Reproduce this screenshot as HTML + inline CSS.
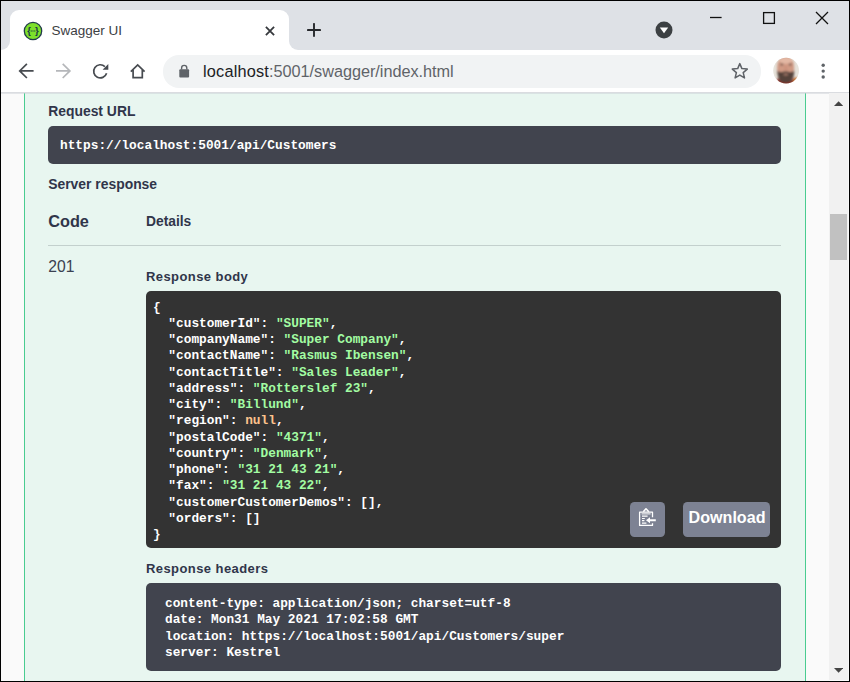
<!DOCTYPE html>
<html>
<head>
<meta charset="utf-8">
<title>Swagger UI</title>
<style>
*{box-sizing:border-box;margin:0;padding:0}
html,body{width:850px;height:682px;overflow:hidden;background:#000}
body{position:relative;font-family:"Liberation Sans",sans-serif;color:#3b4151}
.abs{position:absolute}
#win{left:1px;top:1px;width:848px;height:680px;background:#fff;overflow:hidden}
#tabstrip{left:0;top:0;width:848px;height:49px;background:#dee1e6}
#tab{left:9px;top:9.4px;width:278.7px;height:39.6px;background:#fff;border-radius:9px 9px 0 0}
.flare{width:9px;height:9px;bottom:0;background:#fff}
.flare i{display:block;width:9px;height:9px;background:#dee1e6}
#tabtitle{left:41.5px;top:12.5px;font-size:13.5px;color:#3c4043;white-space:nowrap}
#toolbar{left:0;top:49px;width:848px;height:43px;background:#fff;border-bottom:1px solid #dadce0}
#pill{left:162px;top:5px;width:597.5px;height:32.6px;border-radius:16px;background:#f1f3f4}
#url{left:40px;top:7px;font-size:16.3px;line-height:18px;color:#202124;white-space:nowrap}
#url{letter-spacing:.2px}#url span{color:#5f6368;letter-spacing:-.04px}
#page{left:0;top:92px;width:828px;height:588px;background:#fafafa;overflow:hidden}
#panel{left:23px;top:0;width:782px;height:588px;background:#e8f6f0;border-left:1px solid #49cc90;border-right:1px solid #49cc90}
.lbl{font-weight:bold;color:#30354a;white-space:nowrap}
.dark{background:#41444e;border-radius:5px}
.mono{font-family:"Liberation Mono",monospace;font-weight:bold;color:#fff;white-space:pre}
#sb{left:828px;top:92px;width:20px;height:588px;background:#f1f1f1}
#thumb{left:1px;top:121px;width:17px;height:46px;background:#c1c1c1}
.g{color:#a2fca2}.o{color:#fcc28c}
</style>
</head>
<body>
<div id="win" class="abs">
  <div id="tabstrip" class="abs">
    <div id="tab" class="abs">
      <div class="flare abs" style="left:-9px"><i style="border-radius:0 0 9px 0"></i></div>
      <div class="flare abs" style="right:-9px"><i style="border-radius:0 0 0 9px"></i></div>
      <svg class="abs" style="left:13px;top:10.2px" width="20" height="20" viewBox="0 0 20 20"><circle cx="10" cy="10" r="8.7" fill="#7de02b" stroke="#213b4b" stroke-width="1.3"/><g font-family="Liberation Sans, sans-serif" font-size="9.5" font-weight="bold" text-anchor="middle" fill="#173647"><text x="6.1" y="13.1">{</text><text x="13.9" y="13.1">}</text></g><path d="M7.7 10 H12.3" stroke="#173647" stroke-width="1.1" stroke-dasharray="1.1 0.65"/></svg>
      <div id="tabtitle" class="abs">Swagger UI</div>
      <svg class="abs" style="left:254.3px;top:14.2px" width="12" height="12" viewBox="0 0 12 12"><path d="M1.9 1.9 L10.1 10.1 M10.1 1.9 L1.9 10.1" stroke="#36393d" stroke-width="1.8" fill="none"/></svg>
    </div>
    <svg class="abs" style="left:306px;top:22px" width="14" height="14" viewBox="0 0 14 14"><path d="M7 0.9 V13.1 M0.9 7 H13.1" stroke="#26282c" stroke-width="1.9" fill="none" stroke-linecap="round"/></svg>
    <svg class="abs" style="left:654px;top:20.3px" width="18" height="18" viewBox="0 0 18 18"><circle cx="9" cy="9" r="8.5" fill="#3c4043"/><path d="M4.8 6.6 H13.2 L9 12.2 Z" fill="#fff"/></svg>
    <svg class="abs" style="left:708px;top:9.3px" width="14" height="14" viewBox="0 0 14 14"><path d="M1 7.5 H12.6" stroke="#111" stroke-width="1.3"/></svg>
    <svg class="abs" style="left:761px;top:10px" width="14" height="14" viewBox="0 0 14 14"><rect x="1.6" y="1.6" width="10.8" height="10.8" fill="none" stroke="#111" stroke-width="1.3"/></svg>
    <svg class="abs" style="left:814px;top:10px" width="14" height="14" viewBox="0 0 14 14"><path d="M1 1 L13 13 M13 1 L1 13" stroke="#111" stroke-width="1.3" fill="none"/></svg>
  </div>
  <div id="toolbar" class="abs">
    <div id="pill" class="abs">
      <div id="url" class="abs">localhost<span>:5001/swagger/index.html</span></div>
    </div>
    <svg class="abs" style="left:0;top:0" width="848" height="42" viewBox="1 50 848 42">
      <g fill="none" stroke="#474b50" stroke-width="1.7">
        <path d="M33.6 70.9 H19.6 M26.9 63.8 L19.7 70.9 L26.9 78"/>
        <path d="M106.6 73.3 A6.6 6.6 0 1 1 104.9 66.6"/>
        <path d="M130.8 71.7 L137.7 65 L144.6 71.7 M133.1 70 V77.7 H142.3 V70"/>
      </g>
      <path d="M108.3 64 V69.7 H102.6 Z" fill="#474b50"/>
      <path d="M56 70.9 H70 M62.7 63.8 L69.9 70.9 L62.7 78" fill="none" stroke="#b5b7ba" stroke-width="1.7"/>
      <g>
        <rect x="179.3" y="69.2" width="9.8" height="8.4" rx="1" fill="#5f6368"/>
        <path d="M181.6 69.6 V68 A2.6 2.6 0 0 1 186.8 68 V69.6" stroke="#5f6368" stroke-width="1.4" fill="none"/>
      </g>
      <path d="M739.8 63.6 L741.9 68.6 L747.3 69.1 L743.2 72.6 L744.5 77.9 L739.8 75.1 L735.1 77.9 L736.4 72.6 L732.3 69.1 L737.7 68.6 Z" stroke="#5f6368" stroke-width="1.5" fill="none" stroke-linejoin="round"/>
      <g>
        <clipPath id="av"><circle cx="786.1" cy="70.7" r="12.85"/></clipPath>
        <filter id="bl" x="-20%" y="-20%" width="140%" height="140%"><feGaussianBlur stdDeviation="0.9"/></filter>
        <g clip-path="url(#av)">
          <rect x="772" y="56" width="29" height="30" fill="#e6e2da"/>
          <g filter="url(#bl)">
            <path d="M776 86 L777.5 78 L782 82 L790 82 L795 77.5 L797 86 Z" fill="#8a2b22"/>
            <path d="M793.5 79 L797.5 77 L798 83 L793 85 Z" fill="#c9742e"/>
            <ellipse cx="785.6" cy="68" rx="8.6" ry="13.5" fill="#d09a84"/>
            <ellipse cx="785.8" cy="60.5" rx="6.5" ry="3.2" fill="#e3b8a4"/>
            <path d="M777.3 70.5 Q777.6 80 781.5 82 Q785.8 83.6 790 82 Q794 80 794.3 70.5 Q792 72.5 789.5 72 Q785.8 70.6 782 72 Q779.6 72.5 777.3 70.5 Z" fill="#54433b"/>
            <ellipse cx="785.8" cy="74.4" rx="2.4" ry="1" fill="#a7796a"/>
            <ellipse cx="781.8" cy="64.5" rx="1.5" ry="0.9" fill="#6b5148"/>
            <ellipse cx="790.2" cy="64.5" rx="1.5" ry="0.9" fill="#6b5148"/>
            <path d="M785.4 64 L784.6 70 L787.2 70 Z" fill="#c98d78"/>
          </g>
        </g>
      </g>
      <g fill="#5f6368"><circle cx="823.2" cy="65.2" r="1.7"/><circle cx="823.2" cy="71.1" r="1.7"/><circle cx="823.2" cy="77" r="1.7"/></g>
    </svg>
  </div>
  <div id="page" class="abs">
    <div id="panel" class="abs"></div>
    <div class="abs" style="left:0;top:0;width:828px;height:1px;background:rgba(200,204,210,.45)"></div>
    <div class="lbl abs" style="left:47.2px;top:10.4px;font-size:13.9px">Request URL</div>
    <div class="dark abs" style="left:47px;top:32.6px;width:733px;height:38.2px"></div>
    <div class="mono abs" style="left:59px;top:45px;font-size:12.8px">https://localhost:5001/api/Customers</div>
    <div class="lbl abs" style="left:47.2px;top:82.7px;font-size:13.9px">Server response</div>
    <div class="lbl abs" style="left:47.2px;top:119px;font-size:16.3px">Code</div>
    <div class="lbl abs" style="left:145px;top:121px;font-size:13.8px">Details</div>
    <div class="abs" style="left:47px;top:152px;width:733px;height:1px;background:#c3d0cd"></div>
    <div class="abs" style="left:47.2px;top:165px;font-size:15.7px;color:#3b4151">201</div>
    <div class="lbl abs" style="left:145px;top:176px;font-size:13px;letter-spacing:.42px">Response body</div>
    <div class="dark abs" style="left:145px;top:197.7px;width:635px;height:257.8px;background:#333"></div>
<div class="mono abs" style="left:152px;top:206.5px;font-size:12.8px;line-height:16.25px">{
  "customerId": <span class="g">"SUPER"</span>,
  "companyName": <span class="g">"Super Company"</span>,
  "contactName": <span class="g">"Rasmus Ibensen"</span>,
  "contactTitle": <span class="g">"Sales Leader"</span>,
  "address": <span class="g">"Rotterslef 23"</span>,
  "city": <span class="g">"Billund"</span>,
  "region": <span class="o">null</span>,
  "postalCode": <span class="g">"4371"</span>,
  "country": <span class="g">"Denmark"</span>,
  "phone": <span class="g">"31 21 43 21"</span>,
  "fax": <span class="g">"31 21 43 22"</span>,
  "customerCustomerDemos": [],
  "orders": []
}</div>
    <div class="abs" style="left:629.4px;top:409px;width:35px;height:35.4px;border-radius:4.5px;background:#7d8293"></div>
    <svg class="abs" style="left:0;top:0" width="828" height="588" viewBox="1 93 828 588">
      <g fill="none" stroke="#fff" stroke-width="1.3" stroke-linejoin="round">
        <path d="M652.5 517.3 V512.2 H639.6 V525.4 H652.5 V523.2"/>
        <path d="M643.3 511.8 L646 508.8 L648.8 511.8" stroke-width="1.6"/>
        <path d="M641.6 513.9 H650.6" stroke-width="1"/>
      </g>
      <g stroke="#fff" stroke-width="1.2">
        <path d="M642 516.2 H647.6 M642 518.5 H644.8 M642 520.6 H644.4 M642 523.1 H646.4"/>
      </g>
      <path d="M646 520.2 L650 517.2 V519.2 H655.8 V521.2 H650 V523.2 Z" fill="#fff"/>
    </svg>
    <div class="abs" style="left:681.6px;top:409px;width:87.4px;height:35.4px;border-radius:4.5px;background:#7d8293;color:#fff;font-weight:bold;font-size:16.1px;text-align:center;line-height:31px;padding-left:1.5px">Download</div>
    <div class="lbl abs" style="left:145px;top:468px;font-size:13px;letter-spacing:.42px">Response headers</div>
    <div class="dark abs" style="left:145px;top:489.6px;width:635px;height:88px"></div>
<div class="mono abs" style="left:164px;top:503px;font-size:12.8px;line-height:16.25px">content-type: application/json; charset=utf-8
date: Mon31 May 2021 17:02:58 GMT
location: https://localhost:5001/api/Customers/super
server: Kestrel</div>
  </div>
  <div id="sb" class="abs">
    <div class="abs" style="left:0;bottom:0;width:20px;height:1px;background:#fdfdfd"></div><div class="abs" style="right:0;top:0;width:1px;height:588px;background:#f8f8f8"></div>
    <div id="thumb" class="abs"></div>
    <svg class="abs" style="left:5.3px;top:8.3px" width="9.2" height="5" viewBox="0 0 9.2 5"><path d="M0 5 L4.6 0.2 L9.2 5 Z" fill="#444"/></svg>
    <svg class="abs" style="left:5.3px;top:575px" width="9.2" height="5" viewBox="0 0 9.2 5"><path d="M0 0 L4.6 4.8 L9.2 0 Z" fill="#444"/></svg>
  </div>
</div>
</body>
</html>
